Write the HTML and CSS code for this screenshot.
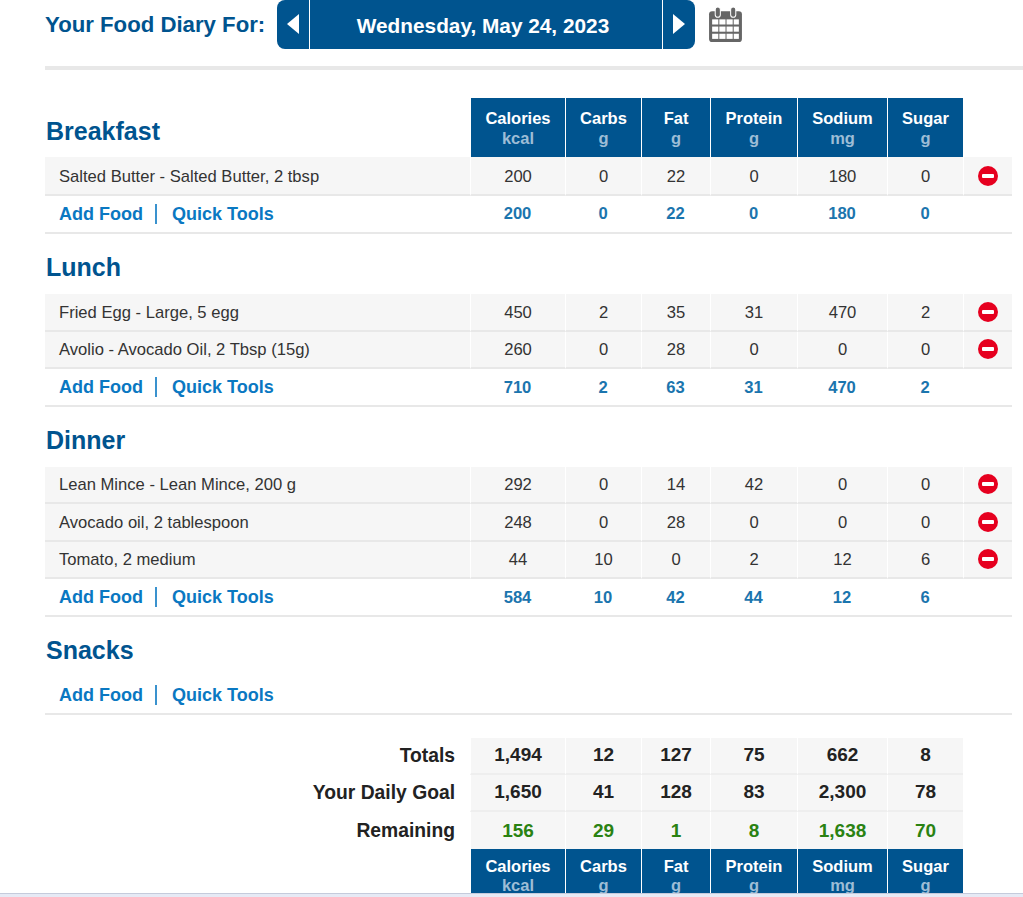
FILE: index.html
```html
<!DOCTYPE html>
<html lang="en">
<head>
    <meta charset="UTF-8">
    <title>Food Diary</title>
    <link rel="stylesheet" href="styles.css">
</head>
<body>
    <main>
        <!-- Date bar -->
        <div class="date-bar">
            <h1>Your Food Diary For:</h1>
            <div class="date-nav">
                <a class="date-arrow" href="#"><span class="arrow-left"></span></a>
                <div class="date-label">Wednesday, May 24, 2023</div>
                <a class="date-arrow" href="#"><span class="arrow-right"></span></a>
            </div>
            <svg class="calendar-icon" viewBox="0 0 34 36" width="34" height="36">
                <rect x="1" y="5" width="32" height="30" rx="3" fill="#666"/>
                <rect x="7" y="1" width="5" height="10" rx="2.5" fill="#666" stroke="#fff" stroke-width="1"/>
                <rect x="22" y="1" width="5" height="10" rx="2.5" fill="#666" stroke="#fff" stroke-width="1"/>
                <g fill="#fff">
                    <rect x="4" y="13" width="6" height="5"/><rect x="11" y="13" width="6" height="5"/><rect x="18" y="13" width="6" height="5"/><rect x="25" y="13" width="5" height="5"/>
                    <rect x="4" y="20" width="6" height="5"/><rect x="11" y="20" width="6" height="5"/><rect x="18" y="20" width="6" height="5"/><rect x="25" y="20" width="5" height="5"/>
                    <rect x="4" y="27" width="6" height="5"/><rect x="11" y="27" width="6" height="5"/><rect x="18" y="27" width="6" height="5"/><rect x="25" y="27" width="5" height="5"/>
                </g>
            </svg>
        </div>

        <table class="diary">
            <colgroup>
                <col class="col-name"><col class="col-cal"><col class="col-carbs"><col class="col-fat">
                <col class="col-protein"><col class="col-sodium"><col class="col-sugar"><col class="col-del">
            </colgroup>

            <!-- Breakfast -->
            <tr class="meal-head first">
                <td class="meal-name">Breakfast</td>
                <th>Calories<span>kcal</span></th><th>Carbs<span>g</span></th><th>Fat<span>g</span></th>
                <th>Protein<span>g</span></th><th>Sodium<span>mg</span></th><th>Sugar<span>g</span></th>
                <td></td>
            </tr>
            <tr class="food tall">
                <td>Salted Butter - Salted Butter, 2 tbsp</td>
                <td>200</td><td>0</td><td>22</td><td>0</td><td>180</td><td>0</td>
                <td class="del"><span class="del-icon"></span></td>
            </tr>
            <tr class="sum tall">
                <td><a href="#">Add Food</a><a href="#">Quick Tools</a></td>
                <td>200</td><td>0</td><td>22</td><td>0</td><td>180</td><td>0</td><td></td>
            </tr>

            <!-- Lunch -->
            <tr class="meal-head"><td class="meal-name" colspan="8">Lunch</td></tr>
            <tr class="food">
                <td>Fried Egg - Large, 5 egg</td>
                <td>450</td><td>2</td><td>35</td><td>31</td><td>470</td><td>2</td>
                <td class="del"><span class="del-icon"></span></td>
            </tr>
            <tr class="food">
                <td>Avolio - Avocado Oil, 2 Tbsp (15g)</td>
                <td>260</td><td>0</td><td>28</td><td>0</td><td>0</td><td>0</td>
                <td class="del"><span class="del-icon"></span></td>
            </tr>
            <tr class="sum">
                <td><a href="#">Add Food</a><a href="#">Quick Tools</a></td>
                <td>710</td><td>2</td><td>63</td><td>31</td><td>470</td><td>2</td><td></td>
            </tr>

            <!-- Dinner -->
            <tr class="meal-head"><td class="meal-name" colspan="8">Dinner</td></tr>
            <tr class="food">
                <td>Lean Mince - Lean Mince, 200 g</td>
                <td>292</td><td>0</td><td>14</td><td>42</td><td>0</td><td>0</td>
                <td class="del"><span class="del-icon"></span></td>
            </tr>
            <tr class="food">
                <td>Avocado oil, 2 tablespoon</td>
                <td>248</td><td>0</td><td>28</td><td>0</td><td>0</td><td>0</td>
                <td class="del"><span class="del-icon"></span></td>
            </tr>
            <tr class="food">
                <td>Tomato, 2 medium</td>
                <td>44</td><td>10</td><td>0</td><td>2</td><td>12</td><td>6</td>
                <td class="del"><span class="del-icon"></span></td>
            </tr>
            <tr class="sum">
                <td><a href="#">Add Food</a><a href="#">Quick Tools</a></td>
                <td>584</td><td>10</td><td>42</td><td>44</td><td>12</td><td>6</td><td></td>
            </tr>

            <!-- Snacks -->
            <tr class="meal-head"><td class="meal-name" colspan="8">Snacks</td></tr>
            <tr class="sum tall">
                <td><a href="#">Add Food</a><a href="#">Quick Tools</a></td>
                <td colspan="7"></td>
            </tr>

            <tr class="gap"><td colspan="8"></td></tr>

            <!-- Totals -->
            <tr class="total">
                <td>Totals</td>
                <td>1,494</td><td>12</td><td>127</td><td>75</td><td>662</td><td>8</td><td></td>
            </tr>
            <tr class="total">
                <td>Your Daily Goal</td>
                <td>1,650</td><td>41</td><td>128</td><td>83</td><td>2,300</td><td>78</td><td></td>
            </tr>
            <tr class="total remaining">
                <td>Remaining</td>
                <td>156</td><td>29</td><td>1</td><td>8</td><td>1,638</td><td>70</td><td></td>
            </tr>
            <tr class="meal-head foot">
                <td></td>
                <th>Calories<span>kcal</span></th><th>Carbs<span>g</span></th><th>Fat<span>g</span></th>
                <th>Protein<span>g</span></th><th>Sodium<span>mg</span></th><th>Sugar<span>g</span></th>
                <td></td>
            </tr>
        </table>
    </main>
    <div class="window-edge"></div>
</body>
</html>
```

FILE: styles.css
```css
* {
    box-sizing: border-box;
    margin: 0;
    padding: 0;
}

html, body {
    height: 897px;
    overflow: hidden;
}

body {
    font-family: 'Liberation Sans', Arial, sans-serif;
    background-color: #fff;
    color: #333;
    font-size: 16px;
}

main {
    padding-left: 45px;
}

/* Date bar */
.date-bar {
    display: flex;
    align-items: center;
    height: 70px;
    padding-top: 1px;
    padding-bottom: 19px;
    border-bottom: 4px solid #e8e8e8;
}

.date-bar h1 {
    font-size: 22.2px;
    font-weight: bold;
    color: #00548f;
    width: 232px;
    padding-top: 2px;
}

.date-nav {
    display: flex;
    height: 49px;
    border-radius: 8px;
    overflow: hidden;
    gap: 1px;
    background-color: #fff;
}

.date-arrow {
    display: flex;
    align-items: center;
    justify-content: center;
    width: 32px;
    background-color: #00548f;
}

.date-label {
    width: 352px;
    background-color: #00548f;
    color: #fff;
    font-size: 20.8px;
    font-weight: bold;
    line-height: 49px;
    padding-top: 1px;
    padding-right: 6px;
    text-align: center;
}

.arrow-left {
    border-top: 10px solid transparent;
    border-bottom: 10px solid transparent;
    border-right: 12px solid #fff;
}

.arrow-right {
    border-top: 10px solid transparent;
    border-bottom: 10px solid transparent;
    border-left: 12px solid #fff;
}

.calendar-icon {
    margin-left: 13px;
    width: 35px;
    height: 37px;
}

/* Diary table */
.diary {
    table-layout: fixed;
    border-collapse: separate;
    border-spacing: 0;
    width: 967px;
    margin-top: 28px;
}

.col-name { width: 425px; }
.col-cal { width: 95px; }
.col-carbs { width: 76px; }
.col-fat { width: 69px; }
.col-protein { width: 87px; }
.col-sodium { width: 90px; }
.col-sugar { width: 76px; }
.col-del { width: 49px; }

.diary th {
    height: 59px;
    padding-top: 1px;
    background-color: #00548f;
    color: #fff;
    font-size: 16.5px;
    font-weight: bold;
    line-height: 20px;
    text-align: center;
    border-left: 1px solid #fff;
    vertical-align: middle;
}

.diary th span {
    display: block;
    color: #9dbdd6;
}

.diary .foot th {
    padding-top: 8px;
    line-height: 19px;
    vertical-align: top;
}

.meal-name {
    font-size: 25px;
    font-weight: bold;
    color: #00548f;
    vertical-align: bottom;
    line-height: 30px;
    padding-left: 1px;
}

.meal-head td.meal-name {
    height: 60px;
    padding-bottom: 12px;
}

.meal-head.first td.meal-name {
    height: 59px;
    padding-bottom: 11px;
}

/* Food rows */
.food td {
    height: 37.5px;
    padding-top: 2px;
    background-color: #f6f6f6;
    border-left: 1px solid #fff;
    border-bottom: 2px solid #e8e8e8;
    text-align: center;
    font-size: 16.6px;
    color: #333;
}

.food td:first-child {
    text-align: left;
    padding-left: 14px;
    border-left: none;
}

.food td.del {
    padding-top: 0;
}

.diary .tall td {
    height: 38px;
}

.diary .food.tall td {
    height: 39px;
}

.del-icon {
    display: block;
    position: relative;
    width: 20px;
    height: 20px;
    margin: 0 auto;
    border-radius: 50%;
    background-color: #e6001f;
}

.del-icon::after {
    content: "";
    position: absolute;
    left: 4px;
    top: 8px;
    width: 12px;
    height: 4px;
    background-color: #fff;
    border-radius: 1px;
}

/* Meal total rows */
.sum td {
    height: 37.5px;
    padding-top: 2px;
    border-bottom: 2px solid #e8e8e8;
    text-align: center;
    font-weight: bold;
    font-size: 16.6px;
    color: #1b75ae;
}

.sum td:first-child {
    text-align: left;
    padding-left: 14px;
}

.food.tall + .sum td {
    padding-top: 0;
}

.sum a {
    font-size: 18px;
    color: #0a78c2;
    text-decoration: none;
}

.sum a + a {
    border-left: 2px solid #3a92ce;
    margin-left: 12px;
    padding-left: 15px;
}

.gap td {
    height: 23px;
}

/* Totals */
.total td {
    height: 37px;
    background-color: #f6f6f6;
    border-left: 1px solid #fff;
    border-bottom: 2px solid #eee;
    text-align: center;
    font-size: 19px;
    font-weight: bold;
    color: #222;
}

.total td:first-child,
.total td:last-child {
    background-color: transparent;
    border: none;
}

.total td:first-child {
    text-align: right;
    padding-right: 15px;
    font-size: 19.3px;
}

.remaining td {
    color: #2a8212;
    border-bottom: none;
    padding-top: 1px;
}

.remaining td:first-child {
    color: #222;
}

.window-edge {
    position: fixed;
    left: 0;
    right: 0;
    bottom: 0;
    height: 4px;
    background-color: #e6eaf5;
    border-top: 1px solid #c5cbdc;
}
```
